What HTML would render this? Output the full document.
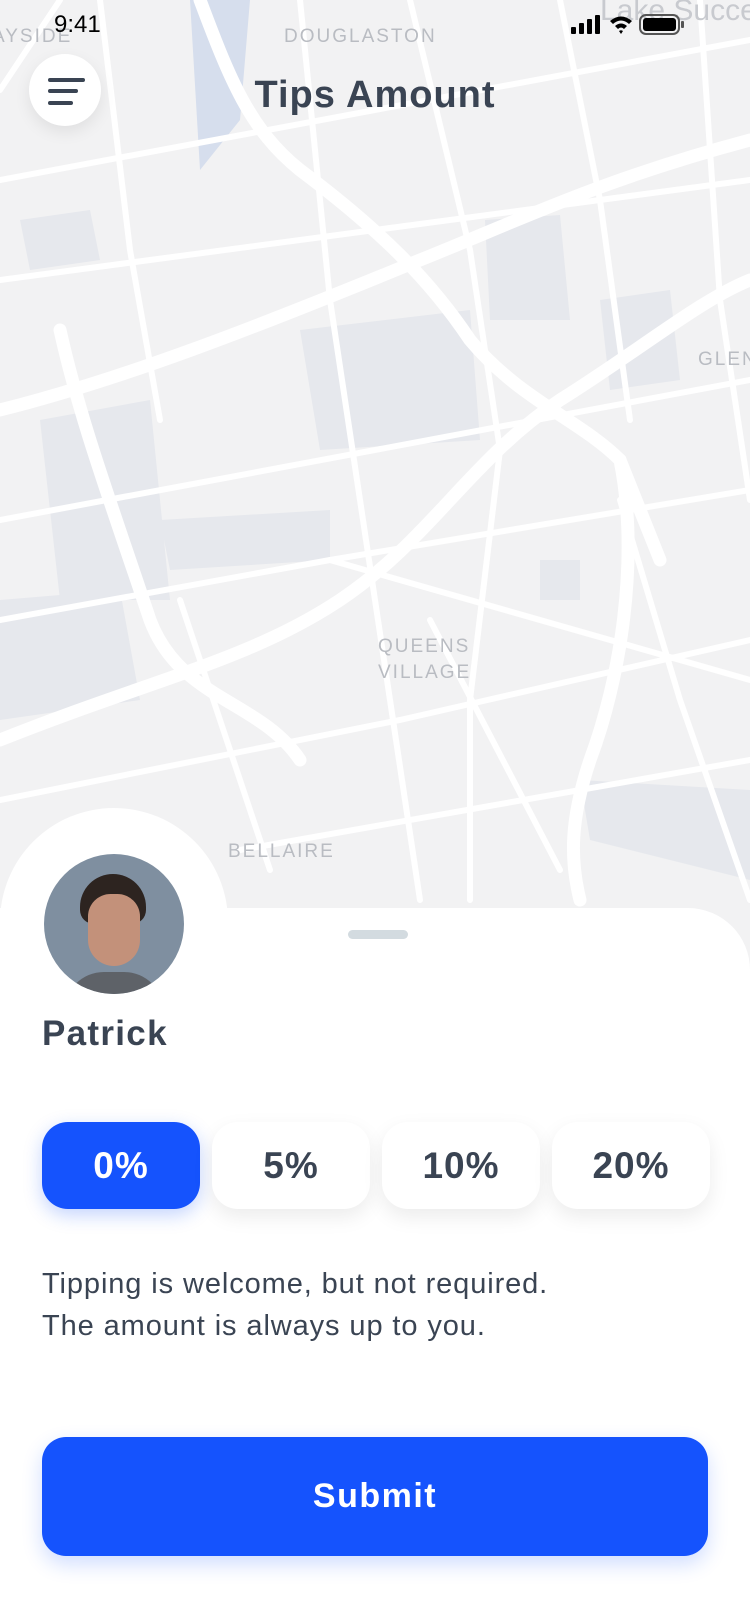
<!DOCTYPE html>
<html><head><meta charset="utf-8"><style>
*{margin:0;padding:0;box-sizing:border-box}
body{width:750px;height:1624px;position:relative;overflow:hidden;background:#f2f2f3;font-family:"Liberation Sans",sans-serif;color:#3a4453}
.abs{position:absolute}
.btn{position:absolute;top:1122px;width:158px;height:87px;border-radius:26px;background:#fff;box-shadow:0 8px 20px rgba(0,0,0,.08);font-weight:bold;font-size:37px;letter-spacing:1px;text-align:center;line-height:87px;color:#3a4453}
</style></head><body>
<svg class="abs" style="left:0;top:0" width="750" height="1000" viewBox="0 0 750 1000">
<g fill="#e6e8ed">
<path d="M190 0 L250 0 L240 120 L200 170 Z" fill="#d6deed"/>
<path d="M485 220 L560 215 L570 320 L490 320 Z"/>
<path d="M300 330 L470 310 L480 440 L320 450 Z"/>
<path d="M40 420 L150 400 L170 600 L60 600 Z"/>
<path d="M0 600 L120 590 L140 700 L0 720 Z"/>
<path d="M160 520 L330 510 L330 560 L170 570 Z"/>
<path d="M600 300 L670 290 L680 380 L610 390 Z"/>
<path d="M580 780 L750 790 L750 880 L590 840 Z"/>
<path d="M540 560 L580 560 L580 600 L540 600 Z"/>
<path d="M20 220 L90 210 L100 260 L30 270 Z"/>
</g>
<g stroke="#fff" fill="none" stroke-linecap="round">
<g stroke-width="13">
<path d="M200 0 C230 80 250 130 300 170 C380 230 430 280 470 340 C520 400 580 420 620 460 L660 560"/>
<path d="M0 410 C120 380 250 330 420 260 C520 220 600 180 750 140"/>
<path d="M0 740 C150 680 250 660 340 600 C430 540 470 460 560 400 C640 350 700 300 750 280"/>
<path d="M60 330 C80 420 110 500 150 620 C180 700 260 700 300 760"/>
<path d="M620 460 C640 560 620 680 590 760 C570 820 570 860 580 900"/>
</g>
<g stroke-width="6">
<path d="M0 180 L750 40"/><path d="M0 280 L750 180"/><path d="M0 520 L750 380"/>
<path d="M0 620 L330 560 L750 490"/><path d="M0 800 L400 720 L750 640"/>
<path d="M240 850 L750 760"/><path d="M330 560 L750 680"/>
<path d="M100 0 L130 250 L160 420"/><path d="M300 0 L330 300 L360 500 L390 700 L420 900"/>
<path d="M410 0 L470 250 L500 450 L470 700 L470 900"/><path d="M560 0 L600 200 L630 420"/>
<path d="M700 0 L720 300 L750 500"/><path d="M0 90 L60 0"/><path d="M180 600 L270 870"/>
<path d="M620 500 L680 700 L750 900"/><path d="M430 620 L560 870"/>
</g>
</g>
<text x="284" y="42" font-family="Liberation Sans" font-size="19" letter-spacing="2" fill="#b9bcc2">DOUGLASTON</text>
<text x="-8" y="42" font-family="Liberation Sans" font-size="19" letter-spacing="2" fill="#b9bcc2">AYSIDE</text>
<text x="600" y="20" font-family="Liberation Sans" font-size="30" fill="#c8cacf">Lake Succe</text>
<text x="698" y="365" font-family="Liberation Sans" font-size="19" letter-spacing="2" fill="#b9bcc2">GLEN</text>
<text x="378" y="652" font-family="Liberation Sans" font-size="19" letter-spacing="2" fill="#b9bcc2">QUEENS</text>
<text x="378" y="678" font-family="Liberation Sans" font-size="19" letter-spacing="2" fill="#b9bcc2">VILLAGE</text>
<text x="228" y="857" font-family="Liberation Sans" font-size="19" letter-spacing="2" fill="#b9bcc2">BELLAIRE</text>
</svg>

<div class="abs" style="left:54px;top:11px;font-size:24px;color:#000">9:41</div>
<svg class="abs" style="left:570px;top:12px" width="134" height="26" viewBox="0 0 134 26">
<rect x="1" y="15" width="5" height="7" rx="1" fill="#000"/><rect x="9" y="11" width="5" height="11" rx="1" fill="#000"/><rect x="17" y="7" width="5" height="15" rx="1" fill="#000"/><rect x="25" y="3" width="5" height="19" rx="1" fill="#000"/>
<path d="M40 9 Q51 0 62 9 L59 12 Q51 5 43 12 Z M45 14 Q51 9 57 14 L54 17 Q51 14 48 17 Z M49 19 L51 22 L53 19 Q51 17.5 49 19Z" fill="#000"/>
<rect x="70" y="3" width="39" height="19" rx="6" fill="none" stroke="#555" stroke-width="2"/><rect x="73" y="6" width="33" height="13" rx="3" fill="#000"/><rect x="111" y="9" width="3" height="7" rx="1" fill="#555"/>
</svg>
<div class="abs" style="left:29px;top:54px;width:72px;height:72px;border-radius:50%;background:#fff;box-shadow:0 6px 16px rgba(0,0,0,.08)"></div>
<div class="abs" style="left:48px;top:78px;width:37px;height:4px;border-radius:2px;background:#3a4453"></div>
<div class="abs" style="left:48px;top:89px;width:30px;height:4px;border-radius:2px;background:#3a4453"></div>
<div class="abs" style="left:48px;top:101px;width:25px;height:4px;border-radius:2px;background:#3a4453"></div>
<div class="abs" style="left:0;top:74px;width:750px;text-align:center;font-size:38px;letter-spacing:1px;font-weight:bold;color:#3a4453">Tips Amount</div>

<div class="abs" style="left:0;top:808px;width:228px;height:228px;border-radius:50%;background:#fff"></div>
<div class="abs" style="left:0;top:908px;width:750px;height:716px;background:#fff;border-top-right-radius:62px"></div>
<div class="abs" style="left:348px;top:930px;width:60px;height:9px;border-radius:5px;background:#d3dbe0"></div>
<div class="abs" style="left:44px;top:854px;width:140px;height:140px;border-radius:50%;background:#7f8fa0;overflow:hidden">
<div class="abs" style="left:36px;top:20px;width:66px;height:50px;border-radius:33px 33px 14px 14px;background:#2d2420"></div>
<div class="abs" style="left:44px;top:40px;width:52px;height:72px;border-radius:26px 26px 30px 30px;background:#c3917a"></div>
<div class="abs" style="left:20px;top:118px;width:100px;height:40px;border-radius:40px 40px 0 0;background:#5e6268"></div>
</div>
<div class="abs" style="left:42px;top:1014px;font-size:35px;letter-spacing:1.3px;font-weight:bold;color:#3a4453">Patrick</div>

<div class="btn" style="left:42px;background:#1553fd;color:#fff;box-shadow:0 6px 18px rgba(21,83,253,.25)">0%</div>
<div class="btn" style="left:212px">5%</div>
<div class="btn" style="left:382px">10%</div>
<div class="btn" style="left:552px">20%</div>

<div class="abs" style="left:42px;top:1263px;font-size:29px;letter-spacing:0.9px;line-height:42px;color:#3a4453">Tipping is welcome, but not required.<br>The amount is always up to you.</div>

<div class="abs" style="left:42px;top:1437px;width:666px;height:119px;border-radius:24px;background:#1553fd;box-shadow:0 8px 20px rgba(21,83,253,.2);color:#fff;font-size:34px;letter-spacing:1.5px;font-weight:bold;text-align:center;line-height:119px">Submit</div>
</body></html>
